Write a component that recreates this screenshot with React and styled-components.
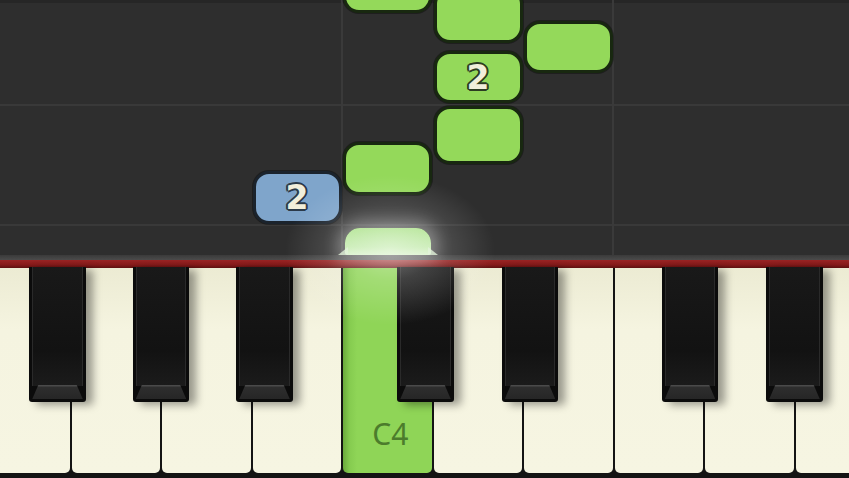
import React from "react";
import styled, { createGlobalStyle } from "styled-components";

const KEY_W = 90.5;
const OFFSET = -19;

const whiteKeys = ["F3", "G3", "A3", "B3", "C4", "D4", "E4", "F4", "G4", "A4"];

// black key sits after a white key, shifted a bit like a real keyboard
const blackKeys = [
  { after: 0, shift: -13 },
  { after: 1, shift: 0 },
  { after: 2, shift: 13 },
  { after: 4, shift: -7 },
  { after: 5, shift: 7 },
  { after: 7, shift: -14 },
  { after: 8, shift: 0 },
];

const notes = [
  { lane: 4, top: -30, height: 43 },
  { lane: 5, top: -12, height: 55 },
  { lane: 6, top: 21, height: 52 },
  { lane: 5, top: 51, height: 52, finger: 2 },
  { lane: 5, top: 106, height: 58 },
  { lane: 4, top: 142, height: 53 },
  { lane: 3, top: 171, height: 53, finger: 2, hand: "left" },
];

const GlobalStyle = createGlobalStyle`
  html, body {
    margin: 0;
    padding: 0;
    background: #2d2d2d;
    overflow: hidden;
  }
`;

const Stage = styled.div`
  position: relative;
  width: 849px;
  height: 478px;
  display: flex;
  flex-direction: column;
  overflow: hidden;
  background: #2d2d2d;
`;

const Roll = styled.div`
  position: relative;
  height: 255px;
  flex: 0 0 255px;
  background-color: #2e2e2e;
  background-image:
    linear-gradient(to right, transparent 341px, #3a3a3a 341px, #3a3a3a 343px, transparent 343px),
    linear-gradient(to right, transparent 612px, #3a3a3a 612px, #3a3a3a 614px, transparent 614px),
    linear-gradient(to bottom, transparent 104px, #393939 104px, #393939 106px, transparent 106px),
    linear-gradient(to bottom, transparent 224px, #393939 224px, #393939 226px, transparent 226px),
    linear-gradient(to bottom, #262626 0, #262626 3px, transparent 3px);
`;

const Note = styled.div`
  position: absolute;
  left: ${(p) => OFFSET + p.$lane * KEY_W}px;
  top: ${(p) => p.$top}px;
  width: 89px;
  height: ${(p) => p.$height}px;
  box-sizing: border-box;
  border-radius: 16px;
  border: 3px solid ${(p) => (p.$hand === "left" ? "#1b232c" : "#182810")};
  background: ${(p) => (p.$hand === "left" ? "#7fa5cb" : "#94d95a")};
  box-shadow: 0 0 0 1px rgba(0, 0, 0, 0.35);
  display: flex;
  align-items: center;
  justify-content: center;
`;

const Finger = styled.span`
  font-family: "DejaVu Sans", "Liberation Sans", sans-serif;
  font-size: 33px;
  font-weight: 600;
  line-height: 1;
  color: #f1eedb;
  text-shadow:
    2px 0 0 ${(p) => p.$outline},
    -2px 0 0 ${(p) => p.$outline},
    0 2px 0 ${(p) => p.$outline},
    0 -2px 0 ${(p) => p.$outline},
    1.4px 1.4px 0 ${(p) => p.$outline},
    -1.4px -1.4px 0 ${(p) => p.$outline},
    1.4px -1.4px 0 ${(p) => p.$outline},
    -1.4px 1.4px 0 ${(p) => p.$outline};
`;

const PressedNote = styled.div`
  position: absolute;
  left: ${OFFSET + 4 * KEY_W + 2}px;
  top: 228px;
  width: 86px;
  height: 27px;
  border-radius: 15px 15px 2px 2px;
  background: linear-gradient(to bottom, #aee28d, #c4ebae 70%, #d9f2cb);
  box-shadow: 0 0 16px 7px rgba(255, 255, 255, 0.3);

  &::before,
  &::after {
    content: "";
    position: absolute;
    bottom: 0;
    width: 10px;
    height: 8px;
    background: rgba(220, 240, 210, 0.8);
  }
  &::before {
    left: -7px;
    clip-path: polygon(100% 0, 100% 100%, 0 100%);
  }
  &::after {
    right: -7px;
    clip-path: polygon(0 0, 100% 100%, 0 100%);
  }
`;

const Rail = styled.div`
  flex: 0 0 5px;
  background: linear-gradient(to bottom, #3a3a3a, #4b4b4b);
`;

const RedBar = styled.div`
  flex: 0 0 8px;
  background: linear-gradient(to bottom, #9a2424, #851a1a 60%, #5e1010);
`;

const Keyboard = styled.div`
  position: relative;
  flex: 0 0 210px;
  display: flex;
  align-items: flex-start;
  gap: 2px;
  margin-left: ${OFFSET}px;
  background: #141414;
`;

const WhiteKey = styled.div`
  flex: 0 0 ${KEY_W - 2}px;
  height: 205px;
  box-sizing: border-box;
  border-radius: 0 0 5px 5px;
  background: ${(p) =>
    p.$pressed
      ? "linear-gradient(to right, #6aa93c 0, #86cc50 7px, #8fd557 14px, #8fd557 100%)"
      : "linear-gradient(to bottom, #ecebd3, #f5f4e0 30%, #f6f5e2)"};
  display: flex;
  align-items: flex-end;
  justify-content: center;
  padding-bottom: 24px;
`;

const KeyLabel = styled.span`
  font-family: "Noto Sans", "Open Sans", sans-serif;
  font-size: 30px;
  color: #4c7c2c;
  line-height: 1;
  margin-left: 6px;
`;

const BlackKey = styled.div`
  position: absolute;
  top: -1px;
  left: ${(p) => p.$left}px;
  width: 56.5px;
  height: 135px;
  box-sizing: border-box;
  background: #0b0b0b;
  border-radius: 0 0 3px 3px;
  box-shadow: 7px 3px 9px rgba(0, 0, 0, 0.38);

  &::before {
    content: "";
    position: absolute;
    left: 3px;
    right: 3px;
    top: 0;
    bottom: 16px;
    border-left: 1px solid #2a2a2a;
    border-right: 1px solid #2a2a2a;
    background: linear-gradient(to bottom, #191919, #121212 70%, #1b1b1b);
  }
  &::after {
    content: "";
    position: absolute;
    left: 3px;
    right: 3px;
    bottom: 3px;
    height: 14px;
    background: linear-gradient(to bottom, #4a4a4a 0, #4a4a4a 1px, #2e2e2e 2px, #262626);
    clip-path: polygon(12% 0, 88% 0, 100% 100%, 0 100%);
  }
`;

const Glow = styled.div`
  position: absolute;
  left: 285px;
  top: 175px;
  width: 210px;
  height: 150px;
  pointer-events: none;
  background: radial-gradient(
    ellipse 50% 50% at 50% 50%,
    rgba(255, 255, 255, 0.4) 0%,
    rgba(255, 255, 255, 0.18) 40%,
    rgba(255, 255, 255, 0) 100%
  );
`;

function App() {
  return (
    <>
      <GlobalStyle />
      <Stage>
        <Roll>
          {notes.map((n, i) => (
            <Note key={i} $lane={n.lane} $top={n.top} $height={n.height} $hand={n.hand}>
              {n.finger && (
                <Finger $outline={n.hand === "left" ? "#2b3a4a" : "#2c3d22"}>
                  {n.finger}
                </Finger>
              )}
            </Note>
          ))}
          <PressedNote />
        </Roll>
        <Rail />
        <RedBar />
        <Keyboard>
          {whiteKeys.map((k) => (
            <WhiteKey key={k} $pressed={k === "C4"}>
              {k === "C4" && <KeyLabel>C4</KeyLabel>}
            </WhiteKey>
          ))}
          {blackKeys.map((b, i) => (
            <BlackKey key={i} $left={(b.after + 1) * KEY_W - 1 + b.shift - 28.25} />
          ))}
        </Keyboard>
        <Glow />
      </Stage>
    </>
  );
}

export default App;
